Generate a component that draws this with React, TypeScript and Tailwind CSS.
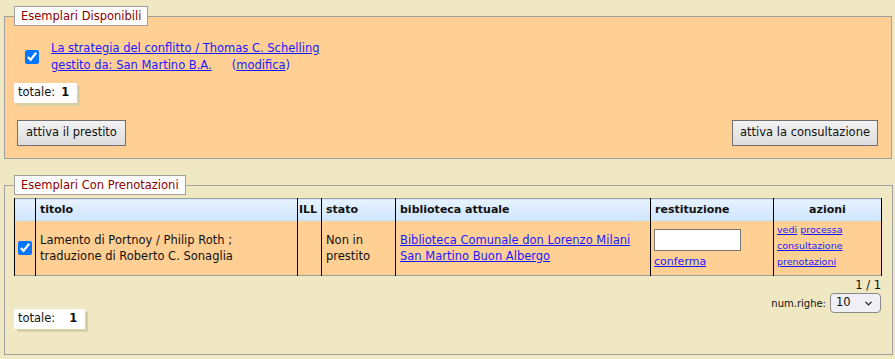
import { ChevronDown } from "lucide-react";

const font = "font-['DejaVu_Sans',sans-serif]";

function Legend({ children }: { children: React.ReactNode }) {
  return (
    <legend className="border border-[#a0a0a0] bg-white px-[6px] text-[11.5px] leading-[18px] text-[#8b0000]">
      {children}
    </legend>
  );
}

function Totale({ gap }: { gap: string }) {
  return (
    <div className="inline-flex h-[20px] items-center bg-white px-[4px] text-[11.5px] text-[#111] shadow-[3px_3px_0_#d6d0a6]">
      <span>totale:</span>
      <b className={`${gap} mr-[4px]`}>1</b>
    </div>
  );
}

function Button({ children, pad }: { children: React.ReactNode; pad: string }) {
  return (
    <button className={`h-[26px] border border-[#707070] bg-gradient-to-b from-[#f3f3f3] to-[#dcdcdc] ${pad} text-[11.5px] text-[#111]`}>
      {children}
    </button>
  );
}

export default function App() {
  return (
    <div className={`${font} min-h-[359px] w-[895px] bg-[#efe8c2] pt-[6px] text-[#111]`}>
      <fieldset className="ml-[4px] w-[888px] border border-[#a0a0a0] bg-[#ffcf94] pb-[12px] pl-[9px] pr-[13px]">
        <Legend>Esemplari Disponibili</Legend>
        <div className="mt-[14px] flex items-center pl-[11px]">
          <input type="checkbox" defaultChecked className="m-0 h-[14px] w-[14px]" />
          <div className="ml-[12px] text-[11.5px] leading-[17px] text-[#1a1aff]">
            <a href="#" className="underline">La strategia del conflitto / Thomas C. Schelling</a>
            <div>
              <a href="#" className="underline">gestito da: San Martino B.A.</a>
              <span className="ml-[20px]">(</span>
              <a href="#" className="underline">modifica</a>
              <span>)</span>
            </div>
          </div>
        </div>
        <div className="mt-[5px]">
          <Totale gap="ml-[6px]" />
        </div>
        <div className="mt-[17px] flex justify-between pl-[3px]">
          <Button pad="px-[8px]">attiva il prestito</Button>
          <Button pad="px-[7px]">attiva la consultazione</Button>
        </div>
      </fieldset>

      <fieldset className="ml-[4px] mt-[16px] w-[888px] border border-[#a0a0a0] pb-[25px] pl-[9px] pr-[10px]">
        <Legend>Esemplari Con Prenotazioni</Legend>
        <table className="mt-[3px] w-[867px] table-fixed border-collapse text-[11.5px]">
          <colgroup>
            <col className="w-[21px]" />
            <col className="w-[262px]" />
            <col className="w-[24px]" />
            <col className="w-[74px]" />
            <col className="w-[255px]" />
            <col className="w-[123px]" />
            <col className="w-[108px]" />
          </colgroup>
          <thead>
            <tr className="h-[22px] border-t border-[#a0a0a0] bg-gradient-to-b from-[#e6f2ff] to-[#cfe5fd] text-left text-[11px] font-bold">
              <th className="border-x border-black"></th>
              <th className="border-r border-black px-[4px]">titolo</th>
              <th className="border-r border-black px-[1px]">ILL</th>
              <th className="border-r border-black px-[4px]">stato</th>
              <th className="border-r border-black px-[4px]">biblioteca attuale</th>
              <th className="border-r border-black px-[4px]">restituzione</th>
              <th className="border-r border-black px-[4px] text-center">azioni</th>
            </tr>
          </thead>
          <tbody>
            <tr className="h-[55px] border-b border-[#a0a0a0] bg-[#ffcf94] leading-[16px]">
              <td className="border-x border-black pl-[3px]">
                <input type="checkbox" defaultChecked className="m-0 mt-[4px] h-[14px] w-[14px]" />
              </td>
              <td className="border-r border-black px-[4px]">
                Lamento di Portnoy / Philip Roth ;
                <br />
                traduzione di Roberto C. Sonaglia
              </td>
              <td className="border-r border-black"></td>
              <td className="border-r border-black px-[4px]">
                Non in
                <br />
                prestito
              </td>
              <td className="border-r border-black px-[4px] text-[#1a1aff]">
                <a href="#" className="underline">Biblioteca Comunale don Lorenzo Milani</a>
                <br />
                <a href="#" className="underline">San Martino Buon Albergo</a>
              </td>
              <td className="border-r border-black px-[3px] align-top">
                <input type="text" className="mt-[8px] block h-[22px] w-[87px] border border-[#767676] bg-white" />
                <a href="#" className="mt-[4px] block text-[11px] leading-[14px] text-[#1a1aff] underline">
                  conferma
                </a>
              </td>
              <td className="border-r border-black px-[3px] align-top text-[9.5px] leading-[16px] text-[#1a1aff]">
                <div className="mt-[1px]">
                  <a href="#" className="underline">vedi</a> <a href="#" className="underline">processa</a>
                </div>
                <a href="#" className="block underline">consultazione</a>
                <a href="#" className="block underline">prenotazioni</a>
              </td>
            </tr>
          </tbody>
        </table>
        <div className="w-[867px] pt-[1px] text-right text-[11.5px] leading-[16px]">1 / 1</div>
        <div className="flex w-[867px] items-center justify-end text-[10px]">
          <span className="mr-[4px]">num.righe:</span>
          <div className="flex h-[20px] w-[51px] items-center justify-between rounded-[4px] border border-[#8a8a8a] bg-[#efeff5] pl-[5px] pr-[6px] text-[11.5px]">
            <span>10</span>
            <ChevronDown size={11} strokeWidth={2.5} />
          </div>
        </div>
        <div className="-mt-[8px]">
          <Totale gap="ml-[14px]" />
        </div>
      </fieldset>
    </div>
  );
}
